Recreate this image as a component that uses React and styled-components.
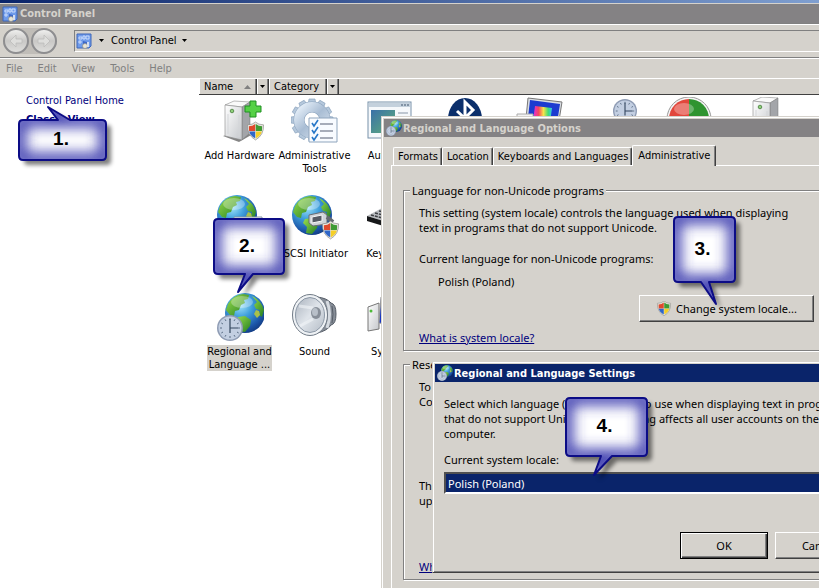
import React, { useState } from 'react';
import styled, { createGlobalStyle, css } from 'styled-components';

const GlobalStyle = createGlobalStyle`
    * {
        box-sizing: border-box;
    }
    body {
        margin: 0;
        background-color: #fff;
        color: #000;
        font-family: 'DejaVu Sans Condensed', 'DejaVu Sans', sans-serif;
        font-size: 11px;
        line-height: 13px;
    }
    button, select {
        font: inherit;
        color: inherit;
    }
`;

const Desktop = styled.div`
    position: relative;
    display: flex;
    flex-direction: column;
    height: 100vh;
    overflow: hidden;
`;
const HiddenSvg = styled.svg`
    position: absolute;
    width: 0;
    height: 0;
`;
const BackWindow = styled.div`
    flex: none;
    height: 3px;
    background: linear-gradient(to right, #0a246a, #7f9fd0);
`;
const MainWindow = styled.main`
    flex: 1;
    min-height: 0;
    display: flex;
    flex-direction: column;
    border-top: 1px solid #d5d2cc;
`;
const TitleBar = styled.header`
    display: flex;
    align-items: center;
    gap: ${(p) => (p.$main ? 2 : 1)}px;
    height: ${(p) => (p.$main ? 19 : 18)}px;
    padding: 0 2px;
    background-color: ${(p) => (p.$active ? '#0a246a' : '#848284')};
    color: ${(p) => (p.$active ? '#fff' : '#d5d2cc')};
    white-space: nowrap;
    svg {
        flex: none;
        width: 16px;
        height: 16px;
    }
`;
const Title = styled.h1`
    margin: 0;
    font-size: 11px;
    font-weight: bold;
`;
const Toolbar = styled.div`
    display: flex;
    align-items: center;
    gap: 17px;
    height: 35px;
    padding-left: 3px;
    border-top: 1px solid #808080;
    border-bottom: 1px solid #808080;
    box-shadow: inset 0 1px 0 #fff;
    background-color: #d5d2cc;
`;
const NavButtons = styled.div`
    display: flex;
    gap: 2px;
    border-radius: 14px;
    background-color: #c0bdb8;
`;
const NavButton = styled.button`
    display: flex;
    align-items: center;
    justify-content: center;
    width: 26px;
    height: 26px;
    padding: 0;
    border: 2px solid #8e8e90;
    border-radius: 50%;
    background: linear-gradient(#efefee, #c9c8c6 50%, #dededc);
`;
const AddressBar = styled.nav`
    flex: 1;
    display: flex;
    align-items: center;
    gap: 7px;
    height: 22px;
    padding-left: 1px;
    border: 1px solid #808080;
    border-right: none;
    border-bottom-color: #fff;
`;
const Crumb = styled.button`
    display: flex;
    align-items: center;
    gap: 5px;
    padding: 0;
    border: none;
    background: transparent;
`;
const MenuBar = styled.nav`
    display: flex;
    align-items: center;
    gap: 13px;
    height: 20px;
    padding-left: 5px;
    border-top: 1px solid #fff;
    background-color: #d5d2cc;
`;
const MenuItem = styled.button`
    padding: 0 1px;
    border: none;
    background: transparent;
    color: #808080;
`;
const Content = styled.div`
    flex: 1;
    display: flex;
    min-height: 0;
`;
const Sidebar = styled.aside`
    display: flex;
    flex-direction: column;
    flex: 0 0 199px;
    gap: 6px;
    padding: 16px 0 0 26px;
`;
const SideLink = styled.a`
    color: #00007c;
    text-decoration: none;
    font-weight: ${(p) => (p.$bold ? 'bold' : 'normal')};
`;
const ItemList = styled.section`
    flex: 1;
    min-width: 0;
    overflow: hidden;
`;
const ColumnHeader = styled.div`
    display: flex;
    height: 17px;
    border-top: 1px solid #fff;
    border-bottom: 1px solid #404040;
    background-color: #d5d2cc;
`;
const ColumnButton = styled.button`
    display: flex;
    align-items: center;
    justify-content: ${(p) => (p.$arrow ? 'center' : 'space-between')};
    width: ${(p) => (p.$arrow ? 12 : 58)}px;
    padding: 0 ${(p) => (p.$arrow ? 0 : 5)}px;
    border: none;
    border-right: 1px solid #404040;
    background: transparent;
    box-shadow: inset 1px 0 0 #fff, inset -1px 0 0 #808080;
`;
const ItemRow = styled.div`
    display: flex;
    height: 98px;
    padding: 2px 0 0 3px;
`;
const Item = styled.button`
    display: flex;
    flex-direction: column;
    align-items: center;
    flex: 0 0 75px;
    gap: 4px;
    padding: 0;
    border: none;
    background: transparent;
    > svg {
        flex: none;
    }
`;
const ItemLabel = styled.span`
    white-space: pre;
    text-align: center;
    background-color: ${(p) => (p.$selected ? '#d5d2cc' : 'transparent')};
`;

const Dialog = styled.section`
    position: absolute;
    left: ${(p) => p.$left}px;
    top: ${(p) => p.$top}px;
    width: ${(p) => p.$width}px;
    padding: 2px;
    border: 1px solid #d5d2cc;
    border-right-color: #404040;
    border-bottom-color: #404040;
    background-color: #d5d2cc;
    box-shadow: inset 1px 1px 0 #fff, inset -1px -1px 0 #808080;
`;
const TabArea = styled.div`
    margin: 8px 7px;
`;
const TabList = styled.div`
    display: flex;
    align-items: flex-end;
    height: 20px;
    padding-left: 2px;
`;
const Tab = styled.button`
    height: 18px;
    padding: 0 3px 0 4px;
    border: 1px solid #fff;
    border-right-color: #404040;
    border-bottom: none;
    border-radius: 2px 2px 0 0;
    background-color: #d5d2cc;
    box-shadow: inset -1px 0 0 #808080;
    white-space: nowrap;
    ${(p) => p.$active && css`
        position: relative;
        height: 21px;
        margin-bottom: -1px;
        padding: 0 5px 2px;
    `}
`;
const TabPanel = styled.div`
    display: flex;
    flex-direction: column;
    gap: 6px;
    padding: 17px 11px 11px;
    border: 1px solid #fff;
    border-right-color: #404040;
    border-bottom-color: #404040;
    font-family: 'Noto Sans', sans-serif;
    line-height: 15px;
`;
const Group = styled.fieldset`
    display: flex;
    flex-direction: column;
    align-items: flex-start;
    min-width: 0;
    margin: 0;
    padding: 0 12px 5px 15px;
    border: 1px solid #808080;
    box-shadow: inset 1px 1px 0 #fff, 1px 1px 0 #fff;
`;
const Legend = styled.legend`
    margin-left: -9px;
    padding: 0 2px;
    background-color: #d5d2cc;
`;
const Text = styled.p`
    margin: ${(p) => p.$gap || 0}px 0 0 ${(p) => (p.$indent ? 19 : 0)}px;
    white-space: pre;
`;
const HelpLink = styled.a`
    margin-top: ${(p) => p.$gap}px;
    color: #00007c;
`;
const PushButton = styled.button`
    display: flex;
    align-items: center;
    justify-content: center;
    gap: 4px;
    align-self: flex-end;
    width: ${(p) => (p.$wide ? 175 : 88)}px;
    height: 27px;
    margin-top: ${(p) => p.$gap || 0}px;
    padding: 0;
    border: 1px solid #fff;
    border-right-color: #404040;
    border-bottom-color: #404040;
    background-color: #d5d2cc;
    box-shadow: inset -1px -1px 0 #808080;
    ${(p) => p.$default && css`
        border-color: #000;
        box-shadow: inset 1px 1px 0 #fff, inset -1px -1px 0 #404040, inset -2px -2px 0 #808080;
    `}
`;
const DialogBody = styled.div`
    display: flex;
    flex-direction: column;
    padding: 14px 9px 11px;
    font-family: 'Noto Sans', sans-serif;
    line-height: 15px;
`;
const FieldLabel = styled.label`
    margin: 11px 0 5px;
`;
const Select = styled.select`
    appearance: none;
    height: 22px;
    padding: 0 2px;
    border: 2px solid #fff;
    border-top-color: #505050;
    border-left-color: #505050;
    border-radius: 0;
    outline: none;
    background-color: #0a246a;
    color: #fff;
`;
const ButtonRow = styled.div`
    display: flex;
    justify-content: flex-end;
    gap: 7px;
    margin-top: 38px;
`;

const CalloutBox = styled.div`
    position: absolute;
    left: ${(p) => p.$left}px;
    top: ${(p) => p.$top}px;
    width: ${(p) => p.$width}px;
    height: ${(p) => p.$height}px;
    display: flex;
    align-items: center;
    justify-content: center;
    padding: 0 4px 2px 0;
    font: bold 19px/22px 'Liberation Sans', Arial, sans-serif;
    svg {
        position: absolute;
        left: 0;
        top: 0;
        overflow: visible;
    }
    span {
        position: relative;
    }
`;

// gradients used by several icons
const SharedDefs = () => (
    <HiddenSvg aria-hidden="true">
        <defs>
            <radialGradient id="sea" cx="38%" cy="30%" r="75%">
                <stop offset="0" stopColor="#a5e6fb" />
                <stop offset="0.4" stopColor="#3f9fdc" />
                <stop offset="0.8" stopColor="#1b55a8" />
                <stop offset="1" stopColor="#123a80" />
            </radialGradient>
            <linearGradient id="land" x1="0" y1="0" x2="1" y2="1">
                <stop offset="0" stopColor="#9be04c" />
                <stop offset="1" stopColor="#237d22" />
            </linearGradient>
            <linearGradient id="metal" x1="0" y1="0" x2="1" y2="1">
                <stop offset="0" stopColor="#ffffff" />
                <stop offset="1" stopColor="#c4c7cb" />
            </linearGradient>
            <linearGradient id="steel" x1="0" y1="0" x2="1" y2="1">
                <stop offset="0" stopColor="#e4eef8" />
                <stop offset="0.5" stopColor="#a9bdd4" />
                <stop offset="1" stopColor="#cfdcea" />
            </linearGradient>
            <linearGradient id="cone" x1="0" y1="0" x2="1" y2="1">
                <stop offset="0" stopColor="#aab2bd" />
                <stop offset="0.5" stopColor="#dfe4ea" />
                <stop offset="1" stopColor="#b4bcc6" />
            </linearGradient>
            <linearGradient id="screen" x1="0" y1="0" x2="1" y2="1">
                <stop offset="0" stopColor="#3a70a8" />
                <stop offset="1" stopColor="#5fb07a" />
            </linearGradient>
            <linearGradient id="spectrum">
                <stop offset="0" stopColor="#e02adf" />
                <stop offset="0.3" stopColor="#f6475c" />
                <stop offset="0.55" stopColor="#f7e34a" />
                <stop offset="0.8" stopColor="#3fdc76" />
                <stop offset="1" stopColor="#35c3f2" />
            </linearGradient>
            <filter id="glow" x="-40%" y="-40%" width="180%" height="180%">
                <feGaussianBlur stdDeviation="7" />
            </filter>
            <filter id="shade" x="-20%" y="-20%" width="150%" height="150%">
                <feGaussianBlur stdDeviation="2" />
            </filter>
        </defs>
    </HiddenSvg>
);

const Globe = ({ cx, cy, r }) => (
    <g transform={`translate(${cx - r} ${cy - r}) scale(${r / 20})`}>
        <circle cx="20" cy="20" r="20" fill="url(#sea)" />
        <path d="M3 11Q8 2 18 1L24 2 23 6 19 7 20 10 16 12 14 17 10 18 9 23 5 22 1 17Z" fill="url(#land)" />
        <path d="M27 3Q36 7 39 17L37 24 34 22 35 17 31 16 29 12 32 9Z" fill="url(#land)" />
        <path d="M13 24L20 23 26 27 25 33 20 39 14 38 15 32 11 28Z" fill="url(#land)" />
        <path d="M31 17l3 1 1 4-3 3-3-4z" fill="#a9c04a" />
        <ellipse cx="17" cy="9" rx="11" ry="6" fill="#fff" opacity="0.3" />
    </g>
);

const Clock = ({ cx, cy, r }) => (
    <g transform={`translate(${cx} ${cy}) scale(${r / 13})`}>
        <circle r="13" fill="#8f9cb4" />
        <circle r="11.5" fill="#c3cfe2" />
        <path d="M0-10v2M0 8v2M-10 0h2M8 0h2M5-8.700l-1 1.700M-5-8.700l1 1.700M5 8.700l-1-1.700M-5 8.700l1-1.700M8.700-5l-1.700 1M-8.700-5l1.700 1M8.700 5l-1.700-1M-8.700 5l1.700-1" stroke="#5c6f86" />
        <path d="M0-9V0H8M0 0V5" fill="none" stroke="#34465e" strokeWidth="1.200" />
    </g>
);

const Shield = ({ x, y, size }) => (
    <g transform={`translate(${x} ${y}) scale(${size / 18})`}>
        <path d="M9 0Q12 3 17.500 3Q18 14 9 19Q0 14 .5 3Q6 3 9 0Z" fill="#e8e6e0" stroke="#8a8a86" strokeWidth="0.700" />
        <path d="M8.700 2Q6 4.300 2 4.500L2.200 9.500H8.700Z" fill="#e0492c" />
        <path d="M9.300 2Q12 4.300 16 4.500L15.800 9.500H9.300Z" fill="#3f9b34" />
        <path d="M2.300 10H8.700V17.200Q3.400 14.500 2.300 10Z" fill="#2f66c8" />
        <path d="M15.700 10H9.300V17.200Q14.600 14.500 15.700 10Z" fill="#f5cf27" />
    </g>
);

const Tower = ({ x, y }) => (
    <g transform={`translate(${x} ${y})`}>
        <path d="M-2 35L14 41 28 33 22 29Z" fill="#333" opacity="0.6" />
        <path d="M0 4L9 0 25 1 17 6Z" fill="#fafafa" stroke="#8d8d8d" strokeWidth="0.600" />
        <path d="M17 6L25 1V32L17 39Z" fill="#a3a5a9" stroke="#777" strokeWidth="0.500" />
        <path d="M0 4L17 6V39L0 35Z" fill="url(#metal)" stroke="#888" strokeWidth="0.600" />
        <path d="M3 13V33M14 14V36" stroke="#d3d5d8" />
        <circle cx="7" cy="10" r="1.800" fill="#8ed07a" stroke="#366f2b" strokeWidth="0.700" />
    </g>
);

const PanelIcon = () => (
    <svg width="16" height="16" viewBox="0 0 16 16">
        <path d="M1 1H15V13L13 15H1Z" fill="#6f9bea" stroke="#3f66b8" />
        <path d="M3 4h3v2H3zM7 3h2v3H7zM10 3h3v3h-3zM3 8h2v2H3z" fill="none" stroke="#dce8ff" strokeWidth="0.800" />
        <path d="M7 8l4 1v3H7z" fill="#3d69c9" />
        <circle cx="9" cy="13" r="2.500" fill="#e8e5d8" stroke="#8a8877" strokeWidth="0.600" />
        <path d="M12 9v5" stroke="#f4f4f4" strokeWidth="1.500" />
    </svg>
);
const RegionSmallIcon = () => (
    <svg width="16" height="16" viewBox="0 0 16 16">
        <Globe cx={10} cy={6} r={6} />
        <Clock cx={5} cy={11} r={5} />
    </svg>
);
const Caret = ({ up }) => (
    <svg width={up ? 7 : 5} height={up ? 4 : 3} viewBox={up ? '0 0 7 4' : '0 0 5 3'}>
        <path d={up ? 'M0 4L3.500 0 7 4Z' : 'M0 0H5L2.500 3Z'} fill={up ? '#808080' : '#000'} />
    </svg>
);
const NavArrow = ({ flip }) => (
    <svg width="16" height="16" viewBox="0 0 16 16">
        <path d={flip ? 'M8 2L14 8 8 14V10H2V6H8Z' : 'M8 2L2 8 8 14V10H14V6H8Z'} fill="#dededc" stroke="#bdbdbb" strokeWidth="0.800" />
    </svg>
);

const teeth = [0, 30, 60, 90, 120, 150, 180, 210, 240, 270, 300, 330];

const drawings = {
    hardware: (
        <>
            <Tower x={9} y={4} />
            <path d="M34 4h6v5h5v6h-5v5h-6v-5h-5V9h5z" fill="#55d146" stroke="#209022" />
            <Shield x={31} y={25} size={17} />
        </>
    ),
    tools: (
        <>
            <g transform="translate(21 23)">
                {teeth.map((a) => <path key={a} d="M-4-14L-3-21H3L4-14Z" transform={`rotate(${a})`} fill="#b5c8dc" stroke="#8ba3bd" strokeWidth="0.700" />)}
                <circle r="13" fill="none" stroke="#8ba3bd" strokeWidth="11" />
                <circle r="13" fill="none" stroke="url(#steel)" strokeWidth="10" />
            </g>
            <path d="M18 21H46V45H18Z" fill="#f8fbff" stroke="#8fa5bd" />
            <path d="M29 27H42M29 34H42M29 41H42" stroke="#8b93a3" strokeWidth="1.500" />
            <path d="M21 26l2 3 4-6M21 33l2 3 4-6M21 40l2 3 4-6" fill="none" stroke="#2777c8" strokeWidth="1.600" />
        </>
    ),
    autoplay: (
        <>
            <rect x="2" y="5" width="43" height="36" fill="#f5f8fb" stroke="#7892aa" />
            <path d="M3 6H44V10H3Z" fill="#c3d0dc" />
            <path d="M35 8h2M38 8h2M41 8h2" stroke="#40566e" />
            <rect x="5" y="13" width="24" height="23" fill="url(#screen)" />
            <path d="M32 16H42M32 20H42M32 24H42" stroke="#8795a6" />
        </>
    ),
    bluetooth: (
        <>
            <ellipse cx="24" cy="22" rx="17" ry="21" fill="#0b2f6b" />
            <path d="M16 14L32 29 24 37V5L32 13 16 29" fill="none" stroke="#fff" strokeWidth="3" />
        </>
    ),
    color: (
        <>
            <path d="M12 1L46 5 41 36 9 32Z" fill="#d9dde2" stroke="#777" />
            <path d="M14 3L44 7 40 33 11 29Z" fill="#1c3bd0" />
            <path d="M19 9L36 11 34 26 17 24Z" fill="url(#spectrum)" />
            <path d="M1 17H17V34H1Z" fill="#f3f3f3" stroke="#aaa" />
        </>
    ),
    datetime: (
        <>
            <path d="M3 27H25V43H3Z" fill="#dfe5ea" stroke="#9aa5ae" />
            <Clock cx={34} cy={14} r={12} />
        </>
    ),
    problems: (
        <>
            <circle cx="23" cy="22" r="22" fill="#f4f4f4" stroke="#999" />
            <path d="M23 2A20 20 0 0 0 23 42Z" fill="#e2473c" />
            <path d="M23 2A20 20 0 0 1 23 42Z" fill="#2f9430" />
            <ellipse cx="18" cy="12" rx="10" ry="6" fill="#fff" opacity="0.3" />
        </>
    ),
    device: <Tower x={12} y={0} />,
    printer: <path d="M3 22L18 8 44 14 46 32 20 40Z" fill="url(#metal)" stroke="#888" />,
    internet: (
        <>
            <Globe cx={21} cy={20} r={20} />
            <path d="M18 22H46V40H18Z" fill="#f1f4f7" stroke="#8795a6" />
        </>
    ),
    iscsi: (
        <>
            <Globe cx={21} cy={20} r={20} />
            <path d="M18 20L32 17 36 20V29L22 31 18 28Z" fill="#cfd3d8" stroke="#686c72" />
            <path d="M21 22L31 20V26L21 28Z" fill="#565c66" stroke="#f6f6f6" />
            <path d="M36 22L42 27" stroke="#656a70" strokeWidth="4" />
            <Shield x={31} y={26} size={17} />
        </>
    ),
    keyboard: (
        <>
            <path d="M1 21L16 13 47 19 34 31Z" fill="#b9bcc0" />
            <path d="M1 21L34 31V36L1 26Z" fill="#17181a" />
            <path d="M5 20L35 28M9 18L38 25M13 16L42 22" stroke="#3c3e42" strokeDasharray="3 1" strokeWidth="1.500" />
        </>
    ),
    region: (
        <>
            <Globe cx={29} cy={20} r={20} />
            <Clock cx={14} cy={35} r={13} />
        </>
    ),
    sound: (
        <>
            <path d="M26 4Q36 5 40 10Q45 11 45 21Q45 31 40 32Q36 38 26 40Z" fill="#868d97" stroke="#555c66" />
            <path d="M36 8Q41 21 36 35" fill="none" stroke="#d6dbe1" strokeWidth="3" />
            <path d="M41 13Q43 21 41 30" fill="none" stroke="#555c66" />
            <ellipse cx="19" cy="22" rx="17.500" ry="20.500" fill="#eff2f5" stroke="#707a86" />
            <ellipse cx="19" cy="22" rx="14.500" ry="17.500" fill="url(#cone)" stroke="#8c98a6" />
            <path d="M22 15L8 13M22 26L9 33" stroke="#f2f5f8" strokeWidth="3" opacity="0.6" />
            <ellipse cx="25" cy="20" rx="5" ry="6" fill="#878e98" />
            <ellipse cx="24" cy="19" rx="3" ry="4" fill="#b8bfc8" />
        </>
    ),
    system: (
        <>
            <path d="M2 14L13 10V36L2 38Z" fill="url(#metal)" stroke="#777" />
            <circle cx="5" cy="18" r="1.500" fill="#4cba38" />
            <path d="M15 4L46 8V34L13 30Z" fill="#1735c4" stroke="#999" />
        </>
    ),
};

const itemRows = [
    [
        { label: 'Add Hardware', icon: 'hardware' },
        { label: 'Administrative\nTools', icon: 'tools' },
        { label: 'AutoPlay', icon: 'autoplay' },
        { label: 'Bluetooth', icon: 'bluetooth' },
        { label: 'Color\nManagement', icon: 'color' },
        { label: 'Date and\nTime', icon: 'datetime' },
        { label: 'Default\nPrograms', icon: 'problems' },
        { label: 'Device\nManager', icon: 'device' },
        { label: 'Printers', icon: 'printer' },
    ],
    [
        { label: 'Internet\nOptions', icon: 'internet' },
        { label: 'iSCSI Initiator', icon: 'iscsi' },
        { label: 'Keyboard', icon: 'keyboard' },
    ],
    [
        { label: 'Regional and\nLanguage ...', icon: 'region', selected: true },
        { label: 'Sound', icon: 'sound' },
        { label: 'System', icon: 'system' },
    ],
];

const menus = ['File', 'Edit', 'View', 'Tools', 'Help'];
const tabs = ['Formats', 'Location', 'Keyboards and Languages', 'Administrative'];

// d is the outline of the bubble together with its tail
const callouts = [
    { text: '1.', left: 19, top: 119, width: 88, height: 42, d: 'M4 1H39L29-12 51 1H83Q87 1 87 5V37Q87 41 83 41H4Q0 41 0 37V5Q0 1 4 1Z' },
    { text: '2.', left: 214, top: 219, width: 70, height: 55, d: 'M4 0H66Q70 0 70 4V51Q70 55 66 55H39L24 73 31 55H4Q0 55 0 51V4Q0 0 4 0Z' },
    { text: '3.', left: 674, top: 217, width: 61, height: 65, d: 'M4 0H57Q61 0 61 4V61Q61 65 57 65H35L42 87 27 65H4Q0 65 0 61V4Q0 0 4 0Z' },
    { text: '4.', left: 566, top: 398, width: 81, height: 58, d: 'M4 0H77Q81 0 81 4V54Q81 58 77 58H46L28 77 35 58H4Q0 58 0 54V4Q0 0 4 0Z' },
];

const Callout = ({ text, left, top, width, height, d }) => {
    const clip = `clip${left}`;
    return (
        <CalloutBox $left={left} $top={top} $width={width} $height={height}>
            <svg width={width} height={height} aria-hidden="true">
                <clipPath id={clip}><path d={d} /></clipPath>
                <path d={d} transform="translate(5 5)" fill="#000" opacity="0.5" filter="url(#shade)" />
                <path d={d} fill="#fff" />
                <g clipPath={`url(#${clip})`}>
                    <path d={d} fill="none" stroke="#4040b0" strokeWidth="14" filter="url(#glow)" />
                </g>
                <path d={d} fill="none" stroke="#0c0c86" strokeWidth="2" strokeLinejoin="round" />
            </svg>
            <span>{text}</span>
        </CalloutBox>
    );
};

const App = () => {
    const [tab, setTab] = useState('Administrative');
    const [selected, setSelected] = useState('region');

    return (
        <Desktop>
            <GlobalStyle />
            <SharedDefs />
            <BackWindow />
            <MainWindow>
                <TitleBar $main>
                    <PanelIcon />
                    <Title>Control Panel</Title>
                </TitleBar>
                <Toolbar>
                    <NavButtons>
                        <NavButton aria-label="Back"><NavArrow /></NavButton>
                        <NavButton aria-label="Forward"><NavArrow flip /></NavButton>
                    </NavButtons>
                    <AddressBar>
                        <PanelIcon />
                        <Crumb aria-label="Locations"><Caret /></Crumb>
                        <Crumb>Control Panel <Caret /></Crumb>
                    </AddressBar>
                </Toolbar>
                <MenuBar>
                    {menus.map((menu) => <MenuItem key={menu}>{menu}</MenuItem>)}
                </MenuBar>
                <Content>
                    <Sidebar>
                        <SideLink href="#home">Control Panel Home</SideLink>
                        <SideLink href="#classic" $bold>Classic View</SideLink>
                    </Sidebar>
                    <ItemList>
                        <ColumnHeader>
                            <ColumnButton>Name <Caret up /></ColumnButton>
                            <ColumnButton $arrow aria-label="Filter by name"><Caret /></ColumnButton>
                            <ColumnButton>Category</ColumnButton>
                            <ColumnButton $arrow aria-label="Filter by category"><Caret /></ColumnButton>
                        </ColumnHeader>
                        {itemRows.map((row) => (
                            <ItemRow key={row[0].icon}>
                                {row.map((item) => (
                                    <Item key={item.icon} onClick={() => setSelected(item.icon)}>
                                        <svg width="48" height="48" viewBox="0 0 48 48">{drawings[item.icon]}</svg>
                                        <ItemLabel $selected={selected === item.icon}>{item.label}</ItemLabel>
                                    </Item>
                                ))}
                            </ItemRow>
                        ))}
                    </ItemList>
                </Content>
            </MainWindow>

            <Dialog $left={381} $top={116} $width={468}>
                <TitleBar>
                    <RegionSmallIcon />
                    <Title>Regional and Language Options</Title>
                </TitleBar>
                <TabArea>
                    <TabList role="tablist">
                        {tabs.map((name) => (
                            <Tab key={name} role="tab" $active={tab === name} onClick={() => setTab(name)}>{name}</Tab>
                        ))}
                    </TabList>
                    <TabPanel>
                        <Group>
                            <Legend>Language for non-Unicode programs</Legend>
                            <Text $gap={7}>{'This setting (system locale) controls the language used when displaying\ntext in programs that do not support Unicode.'}</Text>
                            <Text $gap={16}>Current language for non-Unicode programs:</Text>
                            <Text $gap={8} $indent>Polish (Poland)</Text>
                            <PushButton $wide $gap={6}>
                                <svg width="16" height="16" viewBox="0 0 16 16"><Shield x={1} y={0} size={14} /></svg>
                                Change system locale...
                            </PushButton>
                            <HelpLink href="#locale" $gap={8}>What is system locale?</HelpLink>
                        </Group>
                        <Group>
                            <Legend>Reserved accounts</Legend>
                            <Text $gap={7}>{'To copy your settings to the reserved accounts, click\nCopy to reserved accounts.'}</Text>
                            <PushButton $wide $gap={28}>Copy to reserved...</PushButton>
                            <Text $gap={14}>{'The default user account is copied when you set\nup new users.'}</Text>
                            <HelpLink href="#reserved" $gap={51}>What are reserved accounts?</HelpLink>
                        </Group>
                    </TabPanel>
                </TabArea>
            </Dialog>

            <Dialog $left={432} $top={361} $width={443}>
                <TitleBar $active>
                    <RegionSmallIcon />
                    <Title>Regional and Language Settings</Title>
                </TitleBar>
                <DialogBody>
                    <Text>{'Select which language (system locale) to use when displaying text in programs\nthat do not support Unicode. This setting affects all user accounts on the\ncomputer.'}</Text>
                    <FieldLabel htmlFor="locale">Current system locale:</FieldLabel>
                    <Select id="locale" defaultValue="pl">
                        <option value="pl">Polish (Poland)</option>
                        <option value="en">English (United States)</option>
                    </Select>
                    <ButtonRow>
                        <PushButton $default>OK</PushButton>
                        <PushButton>Cancel</PushButton>
                    </ButtonRow>
                </DialogBody>
            </Dialog>

            {callouts.map((callout) => <Callout key={callout.text} {...callout} />)}
        </Desktop>
    );
};

export default App;
